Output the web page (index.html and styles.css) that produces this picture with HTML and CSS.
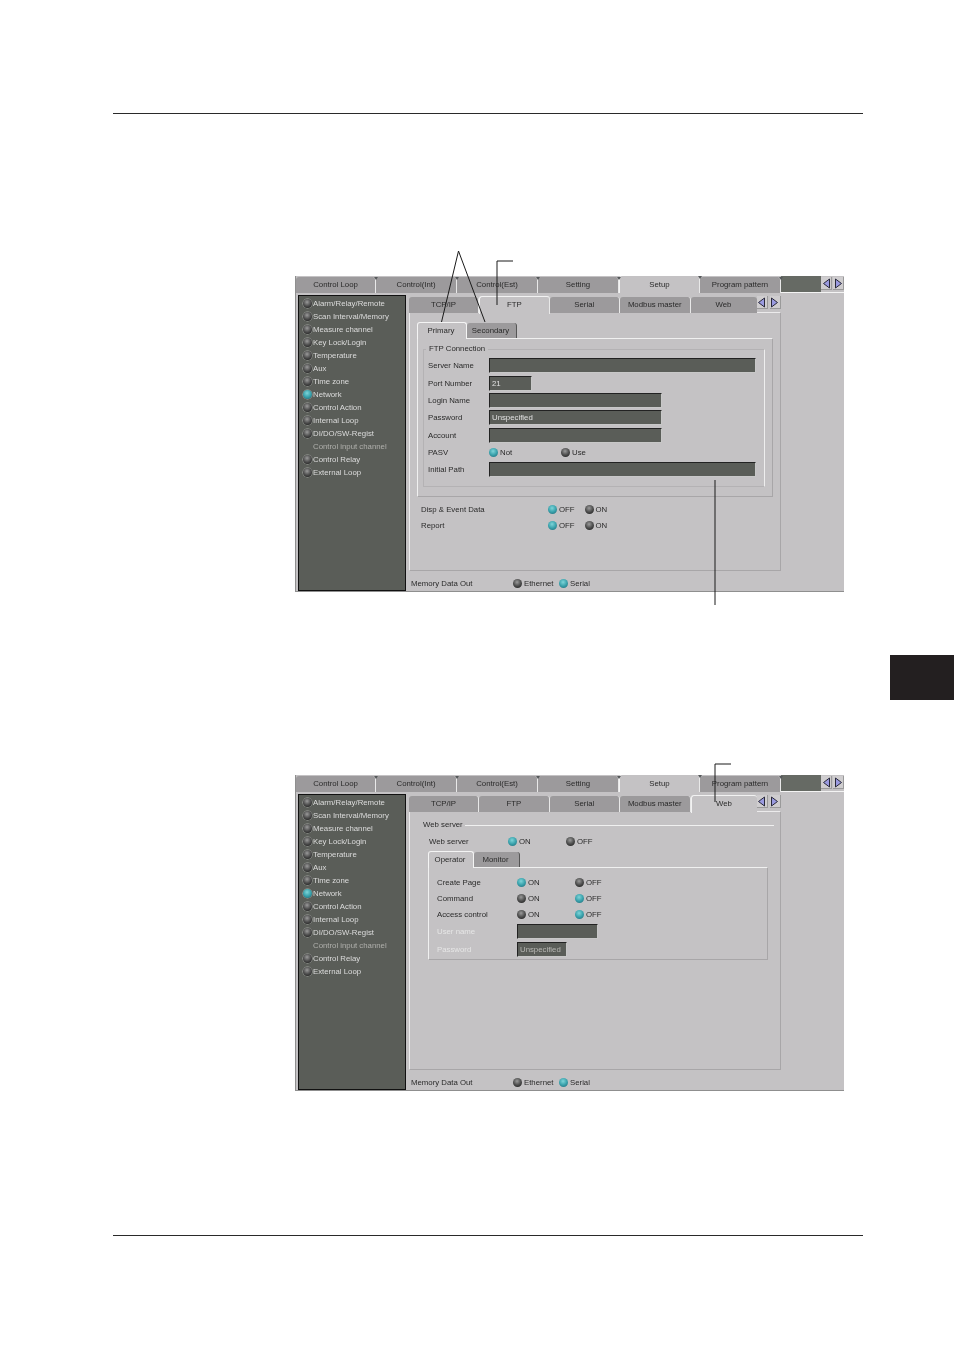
FILE: index.html
```html
<!DOCTYPE html>
<html lang="en">
<head>
<meta charset="utf-8">
<title>Setup</title>
<link rel="stylesheet" href="styles.css">
</head>
<body>
<div class="page">
  <hr class="rule rule-top">

  <section class="shot shot-ftp">
    <div class="toptabs">
      <div class="ttab">Control Loop</div><div class="ttab">Control(Int)</div><div class="ttab">Control(Est)</div><div class="ttab">Setting</div><div class="ttab ttab-on">Setup</div><div class="ttab">Program pattern</div>
      <div class="tfill"></div>
      <div class="arrows">
        <span class="arr"><svg width="9" height="11" viewBox="0 0 9 11"><path d="M7.5 1V10L1.5 5.5Z"/></svg></span>
        <span class="arr"><svg width="9" height="11" viewBox="0 0 9 11"><path d="M1.5 1V10L7.5 5.5Z"/></svg></span>
      </div>
    </div>
    <div class="main">
      <ul class="side">
        <li><i class="led"></i>Alarm/Relay/Remote</li>
        <li><i class="led"></i>Scan Interval/Memory</li>
        <li><i class="led"></i>Measure channel</li>
        <li><i class="led"></i>Key Lock/Login</li>
        <li><i class="led"></i>Temperature</li>
        <li><i class="led"></i>Aux</li>
        <li><i class="led"></i>Time zone</li>
        <li><i class="led on"></i>Network</li>
        <li><i class="led"></i>Control Action</li>
        <li><i class="led"></i>Internal Loop</li>
        <li><i class="led"></i>DI/DO/SW-Regist</li>
        <li class="off"><i class="led none"></i>Control input channel</li>
        <li><i class="led"></i>Control Relay</li>
        <li><i class="led"></i>External Loop</li>
      </ul>
      <div class="pane">
        <div class="subtabs">
          <div class="stab stab-first">TCP/IP</div><div class="stab stab-on">FTP</div><div class="stab">Serial</div><div class="stab">Modbus master</div><div class="stab stab-last">Web</div>
          <div class="arrows arrows-sub">
            <span class="arr"><svg width="9" height="11" viewBox="0 0 9 11"><path d="M7.5 1V10L1.5 5.5Z"/></svg></span>
            <span class="arr"><svg width="9" height="11" viewBox="0 0 9 11"><path d="M1.5 1V10L7.5 5.5Z"/></svg></span>
          </div>
        </div>
        <div class="panel">
          <div class="ptabs">
            <div class="ptab ptab-on">Primary</div><div class="ptab">Secondary</div>
          </div>
          <div class="pbox">
            <fieldset class="fs">
              <legend>FTP Connection</legend>
              <div class="frow"><span class="lbl">Server Name</span><span class="inp w-full"></span></div>
              <div class="frow"><span class="lbl">Port Number</span><span class="inp w-port">21</span></div>
              <div class="frow"><span class="lbl">Login Name</span><span class="inp w-mid"></span></div>
              <div class="frow"><span class="lbl">Password</span><span class="inp w-mid">Unspecified</span></div>
              <div class="frow"><span class="lbl">Account</span><span class="inp w-mid"></span></div>
              <div class="frow"><span class="lbl">PASV</span><span class="opt w-72"><i class="led on"></i>Not</span><span class="opt"><i class="led"></i>Use</span></div>
              <div class="frow"><span class="lbl">Initial Path</span><span class="inp w-full"></span></div>
            </fieldset>
          </div>
          <div class="drows">
            <div class="drow"><span class="dlbl">Disp &amp; Event Data</span><span class="opt w-36"><i class="led on"></i>OFF</span><span class="opt"><i class="led"></i>ON</span></div>
            <div class="drow"><span class="dlbl">Report</span><span class="opt w-36"><i class="led on"></i>OFF</span><span class="opt"><i class="led"></i>ON</span></div>
          </div>
        </div>
        <div class="memory"><span class="mlbl">Memory Data Out</span><span class="opt w-46"><i class="led"></i>Ethernet</span><span class="opt"><i class="led on"></i>Serial</span></div>
      </div>
    </div>
  </section>

  <section class="shot shot-web">
    <div class="toptabs">
      <div class="ttab">Control Loop</div><div class="ttab">Control(Int)</div><div class="ttab">Control(Est)</div><div class="ttab">Setting</div><div class="ttab ttab-on">Setup</div><div class="ttab">Program pattern</div>
      <div class="tfill"></div>
      <div class="arrows">
        <span class="arr"><svg width="9" height="11" viewBox="0 0 9 11"><path d="M7.5 1V10L1.5 5.5Z"/></svg></span>
        <span class="arr"><svg width="9" height="11" viewBox="0 0 9 11"><path d="M1.5 1V10L7.5 5.5Z"/></svg></span>
      </div>
    </div>
    <div class="main">
      <ul class="side">
        <li><i class="led"></i>Alarm/Relay/Remote</li>
        <li><i class="led"></i>Scan Interval/Memory</li>
        <li><i class="led"></i>Measure channel</li>
        <li><i class="led"></i>Key Lock/Login</li>
        <li><i class="led"></i>Temperature</li>
        <li><i class="led"></i>Aux</li>
        <li><i class="led"></i>Time zone</li>
        <li><i class="led on"></i>Network</li>
        <li><i class="led"></i>Control Action</li>
        <li><i class="led"></i>Internal Loop</li>
        <li><i class="led"></i>DI/DO/SW-Regist</li>
        <li class="off"><i class="led none"></i>Control input channel</li>
        <li><i class="led"></i>Control Relay</li>
        <li><i class="led"></i>External Loop</li>
      </ul>
      <div class="pane">
        <div class="subtabs">
          <div class="stab stab-first">TCP/IP</div><div class="stab">FTP</div><div class="stab">Serial</div><div class="stab">Modbus master</div><div class="stab stab-last stab-on">Web</div>
          <div class="arrows arrows-sub">
            <span class="arr"><svg width="9" height="11" viewBox="0 0 9 11"><path d="M7.5 1V10L1.5 5.5Z"/></svg></span>
            <span class="arr"><svg width="9" height="11" viewBox="0 0 9 11"><path d="M1.5 1V10L7.5 5.5Z"/></svg></span>
          </div>
        </div>
        <div class="panel panel-web">
          <fieldset class="fs fs-web">
            <legend>Web server</legend>
            <div class="wrow"><span class="wlbl">Web server</span><span class="opt w-58"><i class="led on"></i>ON</span><span class="opt"><i class="led"></i>OFF</span></div>
            <div class="ptabs ptabs-web">
              <div class="ptab ptab-on">Operator</div><div class="ptab">Monitor</div>
            </div>
            <div class="wbox">
              <div class="orow"><span class="olbl">Create Page</span><span class="opt w-58"><i class="led on"></i>ON</span><span class="opt"><i class="led"></i>OFF</span></div>
              <div class="orow"><span class="olbl">Command</span><span class="opt w-58"><i class="led"></i>ON</span><span class="opt"><i class="led on"></i>OFF</span></div>
              <div class="orow"><span class="olbl">Access control</span><span class="opt w-58"><i class="led"></i>ON</span><span class="opt"><i class="led on"></i>OFF</span></div>
              <div class="orow orow-inp"><span class="olbl olbl-inp dim">User name</span><span class="inp w-user"></span></div>
              <div class="orow orow-inp"><span class="olbl olbl-inp dim">Password</span><span class="inp w-pass dimtxt">Unspecified</span></div>
            </div>
          </fieldset>
        </div>
        <div class="memory"><span class="mlbl">Memory Data Out</span><span class="opt w-46"><i class="led"></i>Ethernet</span><span class="opt"><i class="led on"></i>Serial</span></div>
      </div>
    </div>
  </section>

  <hr class="rule rule-bottom">

  <div class="thumb"></div>

  <svg class="leaders" width="954" height="1350" viewBox="0 0 954 1350" aria-hidden="true">
    <path d="M441.5 322L458.5 251L485 322"/>
    <path d="M497 305V261H513"/>
    <path d="M715 480V605"/>
    <path d="M715 802V764H731"/>
  </svg>
</div>
</body>
</html>
```
FILE: styles.css
```css
* { box-sizing: border-box; }
html, body { margin: 0; padding: 0; background: #fff; }
body { font-family: "Liberation Sans", Arial, sans-serif; font-size: 7.8px; color: #2a2a2a; }
.page { position: relative; width: 954px; height: 1350px; padding-top: 113px; overflow: hidden; }

.rule { display: block; border: 0; height: 1px; background: #2a2a2a; margin: 0 0 0 113px; width: 750px; }
.rule-bottom { margin-top: 144px; }
.thumb { position: absolute; left: 890px; top: 655px; width: 64px; height: 45px; background: #231f20; }
.leaders { position: absolute; left: 0; top: 0; pointer-events: none; }
.leaders path { fill: none; stroke: #1a1a1a; stroke-width: 1; }

.shot { width: 549px; height: 316px; margin-left: 295px; background: #c4c2c4; border-left: 1px solid #8f8f8f; border-bottom: 1px solid #8f8f8f; filter: blur(.25px); }
.shot-ftp { margin-top: 162px; }
.shot-web { margin-top: 183px; }

.toptabs { display: flex; height: 17px; border-bottom: 1px solid #f4f4f4; position: relative; }
.ttab { width: 81px; height: 16px; margin-top: 1px; background: #9c9a9c; border-right: 1px solid #e8e8e8; border-radius: 3px 3px 0 0; text-align: center; line-height: 15px; position: relative; flex: none; }
.ttab:first-child { width: 80px; }
.ttab::after { content: ""; position: absolute; right: -3px; top: 0; border: 2px solid transparent; border-top: 3px solid #55585a; z-index: 2; }
.ttab-on { background: #c4c2c4; height: 17px; margin-top: 0; border-left: 1px solid #f4f4f4; z-index: 1; line-height: 17px; }
.tfill { width: 41px; height: 16px; background: #666a64; }
.arrows { display: flex; width: 23px; height: 16px; gap: 1px; background: #c4c2c4; padding-top: 1px; }
.arr { width: 11px; height: 13px; display: flex; align-items: center; justify-content: center; background: #cfcdcf; border-right: 1px solid #9a9a9a; border-bottom: 1px solid #9a9a9a; }
.arr path { fill: #9a9ae0; stroke: #2a2a3a; stroke-width: 1; }
.arrows-sub { width: 24px; gap: 2px; background: transparent; padding-top: 0; }

.main { display: flex; height: 298px; padding: 2px 0 0 2px; }
.side { list-style: none; margin: 0; padding: 1px 0 0 3px; width: 108px; height: 296px; background: #5a5d58; border: 1px solid #111; color: #dcdcdc; flex: none; }
.side li { display: flex; align-items: center; height: 13px; white-space: nowrap; }
.side li.off { color: #b0b0ac; }
.side .led { margin-right: 1px; margin-left: 1px; box-shadow: 0 0 0 .5px #a9aba7; }

.led { display: inline-block; width: 9px; height: 9px; border-radius: 50%; margin-right: 2px; flex: none; background: radial-gradient(circle at 45% 35%, #9a9a9a 0, #555 45%, #1c1c1c 90%); }
.led.on { background: radial-gradient(circle at 45% 35%, #7ed4d8 0, #3aa2ac 50%, #1f6a78 95%); }
.led.none { visibility: hidden; }

.pane { width: 373px; margin: 1px 0 0 3px; flex: none; }
.subtabs { display: flex; height: 16px; position: relative; z-index: 1; }
.stab { width: 70.5px; height: 16px; margin-top: 1px; background: #9c9a9c; border-right: 1px solid #e8e8e8; border-radius: 3px 3px 0 0; text-align: center; line-height: 15px; flex: none; }
.stab-first { width: 70px; }
.stab-last { width: 66px; border-right: 0; }
.stab-on { background: #c4c2c4; height: 18px; margin-top: 0; border-top: 1px solid #f2f2f2; border-left: 1px solid #f2f2f2; }
.panel { height: 259px; width: 372px; border: 1px solid #a8a6a8; border-left-color: #ecebec; border-top-color: #ecebec; padding: 9px 0 0 7px; }
.ptabs { display: flex; height: 16px; position: relative; z-index: 1; }
.ptab { width: 50px; height: 15px; margin-top: 1px; padding-right: 2px; background: #9c9a9c; border-right: 1px solid #555; border-radius: 3px 3px 0 0; text-align: center; line-height: 15px; }
.ptab-on { background: #c4c2c4; height: 17px; margin-top: 0; border-top: 1px solid #f4f4f4; border-left: 1px solid #f4f4f4; border-right: 1px solid #f4f4f4; }
.pbox { width: 356px; height: 159px; border: 1px solid #f0f0f0; border-right-color: #a8a6a8; border-bottom-color: #a8a6a8; padding: 5px 0 0 5px; }
.fs { margin: 0; padding: 0 0 0 4px; width: 342px; height: 143px; border: 1px solid #b4b2b4; border-right-color: #eeeeee; min-width: 0; }
.fs legend { padding: 0 3px; margin-left: -2px; line-height: 10px; }
.frow { display: flex; align-items: center; height: 17.35px; }
.frow:first-of-type { margin-top: 3px; }
.lbl { width: 61px; flex: none; }
.inp { display: block; height: 15px; background: #5a5d58; border: 1px solid #c8c8c8; border-top-color: #222; border-left-color: #222; color: #e0e0e0; line-height: 13px; padding-left: 2px; flex: none; }
.w-full { width: 267px; }
.w-port { width: 43px; }
.w-mid { width: 173px; }
.w-user { width: 81px; }
.w-pass { width: 50px; }
.dimtxt { color: #b8b8b4; }
.opt { display: inline-flex; align-items: center; flex: none; white-space: nowrap; }
.w-72 { width: 72px; }
.w-36 { width: 36.5px; }
.w-46 { width: 46px; }
.w-58 { width: 58px; }

.drows { padding: 4px 0 0 4px; }
.drow { display: flex; align-items: center; height: 16px; }
.dlbl { width: 127px; flex: none; }

.memory { display: flex; align-items: center; height: 19px; padding: 6px 0 0 2px; }
.mlbl { width: 102px; flex: none; }

.panel-web { padding: 8px 0 0 11px; }
.fs-web { width: 353px; height: 240px; padding: 0 0 0 7px; border: 0; border-top: 1px solid #f0f0f0; }
.fs-web legend { margin-left: -7px; padding: 0 2px; }
.wrow { display: flex; align-items: center; height: 14px; margin-top: 4px; padding-left: 1px; }
.wlbl { width: 79px; flex: none; }
.ptabs-web { margin-top: 3px; }
.ptabs-web .ptab { width: 46px; }
.wbox { width: 340px; height: 93px; border: 1px solid #f0f0f0; border-right-color: #a8a6a8; border-bottom-color: #a8a6a8; padding: 6px 0 0 8px; }
.orow { display: flex; align-items: center; height: 16px; }
.orow-inp { height: 18px; }
.olbl { width: 80px; flex: none; }
.olbl-inp { width: 80px; }
.dim { color: #e6e6e6; }
```
